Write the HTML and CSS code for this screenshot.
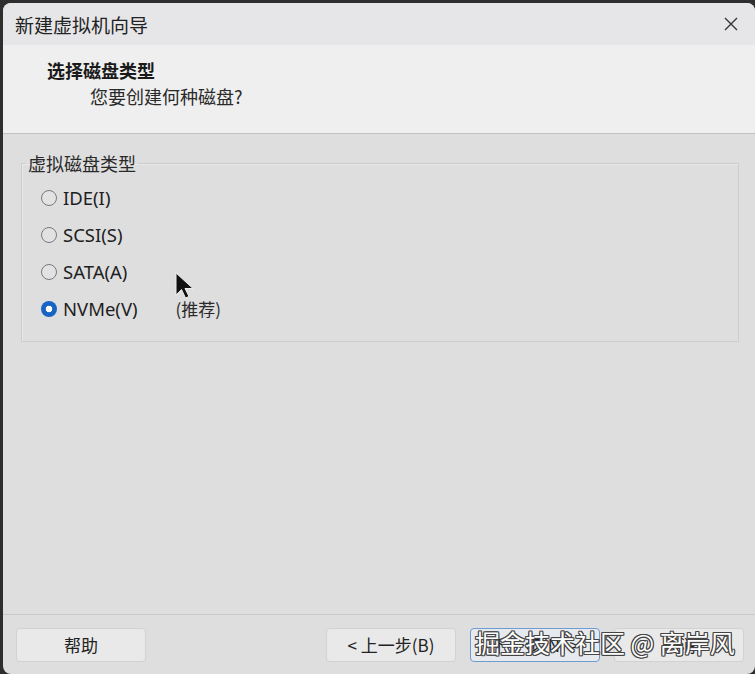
FILE: index.html
```html
<!DOCTYPE html>
<html lang="zh-CN">
<head>
<meta charset="utf-8">
<title>新建虚拟机向导</title>
<link rel="stylesheet" href="styles.css">
</head>
<body>
<div class="window">
  <div class="titlebar">
    <span class="title">新建虚拟机向导</span>
    <svg class="close" width="14" height="14" viewBox="0 0 14 14"><path d="M1 1 L13 13 M13 1 L1 13" stroke="#333" stroke-width="1.4" fill="none"/></svg>
  </div>
  <div class="header">
    <div class="h-title">选择磁盘类型</div>
    <div class="h-sub">您要创建何种磁盘?</div>
  </div>
  <div class="body">
    <fieldset class="group">
      <legend class="legend">虚拟磁盘类型</legend>
      <div class="opt"><span class="radio"></span><span class="lbl">IDE(I)</span></div>
      <div class="opt"><span class="radio"></span><span class="lbl">SCSI(S)</span></div>
      <div class="opt"><span class="radio"></span><span class="lbl">SATA(A)</span></div>
      <div class="opt"><span class="radio checked"></span><span class="lbl nvme">NVMe(V)</span><span class="rec">(推荐)</span></div>
    </fieldset>
  </div>
  <div class="footer">
    <button class="btn">帮助</button>
    <div class="spacer"></div>
    <button class="btn">&lt; 上一步(B)</button>
    <button class="btn focus">下一步(N) &gt;</button>
    <button class="btn">取消</button>
  </div>
  <svg class="cursor" width="24" height="30" viewBox="0 0 24 30"><path d="M1 1 L1 23 L6.5 17.5 L10.5 26 L14 24.5 L10 16.5 L18 16.5 Z" fill="#111" stroke="#eee" stroke-width="1"/></svg>
  <div class="watermark">掘金技术社区 @ 离岸风</div>
</div>
</body>
</html>
```

FILE: styles.css
```css
html, body {
  margin: 0;
  padding: 0;
  background: #2e2e2e;
  width: 755px;
  height: 674px;
  overflow: hidden;
}
body {
  font-family: "Noto Sans", "Noto Sans CJK SC", sans-serif;
  color: #1e1e1e;
  padding-top: 3px;
  padding-left: 3px;
  box-sizing: border-box;
}
.window {
  position: relative;
  height: 671px;
  background: #dedede;
  border-radius: 8px;
  display: flex;
  flex-direction: column;
  overflow: hidden;
}
.titlebar {
  height: 42px;
  background: #e6e6e8;
  display: flex;
  align-items: center;
  padding-left: 12px;
  padding-right: 17px;
  justify-content: space-between;
}
.title {
  font-family: "Noto Sans CJK SC", sans-serif;
  font-size: 19px;
  color: #222;
}
.close {
  display: block;
}
.header {
  background: #efefef;
  border-bottom: 1px solid #c2c2c2;
  padding-top: 12px;
  box-sizing: border-box;
  height: 89px;
}
.h-title {
  font-family: "Noto Sans CJK SC", sans-serif;
  font-weight: 700;
  font-size: 18px;
  line-height: 26px;
  padding-left: 44px;
  color: #1a1a1a;
}
.h-sub {
  font-family: "Noto Sans CJK SC", sans-serif;
  font-size: 18px;
  line-height: 26px;
  padding-left: 87px;
  margin-top: 0;
  color: #2a2a2a;
}
.body {
  flex: 1;
  border-bottom: 1px solid #cacaca;
  padding-top: 17px;
}
.group {
  margin: 0 16px 0 18px;
  padding: 4px 0 14px 0;
  border: 1px solid #cdcdcd;
  box-shadow: inset 1px 1px 0 #e8e8e8;
}
.legend {
  font-family: "Noto Sans CJK SC", sans-serif;
  font-size: 18px;
  line-height: 24px;
  padding: 0 2px;
  margin-left: 4px;
  color: #2a2a2a;
}
.opt {
  display: flex;
  align-items: center;
  height: 37px;
  padding-left: 19px;
}
.radio {
  width: 14px;
  height: 14px;
  border-radius: 50%;
  border: 1px solid #7a7a7a;
  background: #e2e2e2;
  margin-right: 6px;
  flex: none;
}
.radio.checked {
  width: 16px;
  height: 16px;
  border: none;
  background: radial-gradient(circle, #ffffff 0 3px, #1864c6 3.6px);
}
.lbl {
  font-size: 18.5px;
  line-height: 24px;
  color: #1e1e1e;
}
.rec {
  font-family: "Noto Sans CJK SC", sans-serif;
  font-size: 17px;
  margin-left: 38px;
  color: #2a2a2a;
}
.footer {
  height: 59px;
  display: flex;
  align-items: center;
  padding: 0 11px 0 13px;
  gap: 14px;
}
.spacer {
  flex: 1;
}
.btn {
  width: 130px;
  height: 34px;
  background: #e9e9e9;
  border: 1px solid #d2d2d2;
  border-radius: 4px;
  font-family: "Noto Sans CJK SC", sans-serif;
  font-size: 17px;
  color: #222;
  padding: 0;
}
.btn.focus {
  border: 1px solid #6e9bd2;
  background: #e6e9ee;
}
.cursor {
  position: absolute;
  left: 172px;
  top: 269px;
}
.watermark {
  position: absolute;
  left: 472px;
  top: 622px;
  font-family: "Noto Sans CJK SC", sans-serif;
  font-size: 25px;
  line-height: 34px;
  color: #ffffff;
  white-space: nowrap;
  text-shadow: 1px 1px 0 #444, -1px -1px 0 #444, 1px -1px 0 #444, -1px 1px 0 #444, 0 1px 0 #444, 0 -1px 0 #444, 1px 0 0 #444, -1px 0 0 #444;
}
```
